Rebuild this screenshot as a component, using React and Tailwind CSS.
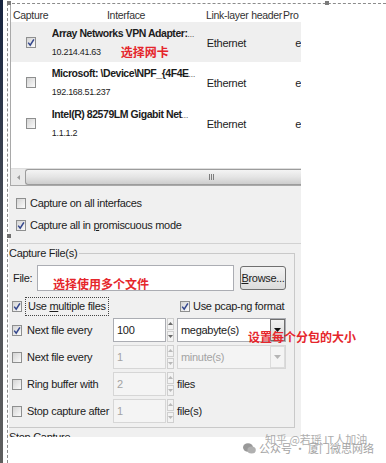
import React from "react";

function Check({ checked }) {
  return (
    <span className="w-[10px] h-[11px] shrink-0 border border-[#8e8f8f] bg-gradient-to-br from-[#d4d4d4] to-[#fbfbfb] flex items-center justify-center">
      {checked && (
        <svg width="8" height="9" viewBox="0 0 8 9">
          <path d="M1.2 4.6 L3.2 7.2 L6.9 1.3" stroke="#33468c" strokeWidth="1.5" fill="none" />
        </svg>
      )}
    </span>
  );
}

function Tri({ up, color }) {
  return (
    <svg width="5" height="3" viewBox="0 0 5 3">
      <path d={up ? "M0 3 L2.5 0 L5 3 Z" : "M0 0 L5 0 L2.5 3 Z"} fill={color} />
    </svg>
  );
}

function Spin({ value, disabled }) {
  return (
    <div className="flex h-full w-[61px] shrink-0">
      <div
        className={`w-[53px] h-full border flex items-center pl-[3px] ${
          disabled ? "border-[#d6d6d6] bg-[#f4f4f4] text-[#a3a3a3]" : "border-[#abadb3] bg-white text-[#1a1a1a]"
        }`}
      >
        {value}
      </div>
      <div className="w-[7px] ml-[1px] flex flex-col gap-[1px]">
        <div className="flex-1 border border-[#cfcfcf] bg-[#f3f3f3] flex items-center justify-center">
          <Tri up color={disabled ? "#b8b8b8" : "#6a6a6a"} />
        </div>
        <div className="flex-1 border border-[#cfcfcf] bg-[#f3f3f3] flex items-center justify-center">
          <Tri color={disabled ? "#b8b8b8" : "#6a6a6a"} />
        </div>
      </div>
    </div>
  );
}

function Combo({ value, disabled, children }) {
  return (
    <div
      className={`relative w-[109px] h-full border flex items-center ml-[3px] ${
        disabled ? "border-[#d6d6d6] bg-[#f4f4f4] text-[#a3a3a3]" : "border-[#abadb3] bg-white text-[#1a1a1a]"
      }`}
    >
      <span className="pl-[3px] flex-1 whitespace-nowrap">{value}</span>
      <div
        className={`w-[15px] h-full border flex items-center justify-center ${
          disabled ? "border-[#dcdcdc] bg-[#f4f4f4]" : "border-[#707070] bg-gradient-to-b from-[#f2f2f2] to-[#d8d8d8]"
        }`}
      >
        <svg width="7" height="4" viewBox="0 0 7 4">
          <path d="M0 0 L7 0 L3.5 4 Z" fill={disabled ? "#b5b5b5" : "#111"} />
        </svg>
      </div>
      {children}
    </div>
  );
}

function IfaceRow({ name, ip, note, selected, h }) {
  return (
    <div className={`flex ${h} ${selected ? "bg-[#efefef]" : ""}`}>
      <div className="w-[41px] pl-[15px] flex items-center">
        <Check checked={selected} />
      </div>
      <div className="w-[146px] pt-[4px] overflow-hidden">
        <div className="font-bold leading-[15px] whitespace-nowrap text-[10.5px] tracking-[-0.45px]">
          {name}
          <span className="font-normal text-[8px] tracking-normal">...</span>
        </div>
        <div className="flex items-center mt-[3px] leading-[14px]">
          <span className="text-[9px]">{ip}</span>
          {note && (
            <span className="ml-[20px] text-[12px] font-bold tracking-normal text-[#e5262c] font-['Noto_Sans_CJK_SC',sans-serif]">
              {note}
            </span>
          )}
        </div>
      </div>
      <div className="w-[99px] pl-[10px] flex items-center pt-[2px]">Ethernet</div>
      <div className="flex items-center pt-[2px]">e</div>
    </div>
  );
}

export default function App() {
  return (
    <div className="w-[386px] h-[463px] bg-white relative overflow-hidden flex font-['Liberation_Sans',Arial,sans-serif] text-[11px] tracking-[-0.3px] whitespace-nowrap text-[#1c1c1c]">
      <div className="w-[3px] bg-gradient-to-b from-[#16233f] via-[#4b4f57] to-[#5e5e5e]" />
      <div className="w-[4px]" />
      <div className="flex-1 flex flex-col pt-[3px]">
        <div className="flex-1 border-t border-l border-dashed border-[#8c8c8c] flex flex-col">
          <div className="w-[292px] ml-[1px] flex flex-col">
            {/* interface list */}
            <div className="h-[182px] ml-[1px] border-l border-b border-[#a9a9a9] bg-white flex flex-col overflow-hidden">
              <div className="mt-[4px] h-[14px] flex items-center text-[#333] leading-[14px] text-[10.5px]">
                <span className="w-[96px] pl-[2px]">Capture</span>
                <span className="w-[99px]">Interface</span>
                <span className="w-[77px]">Link-layer header</span>
                <span>Pro</span>
              </div>
              <IfaceRow selected h="h-[40px]" name="Array Networks VPN Adapter:" ip="10.214.41.63" note="选择网卡" />
              <IfaceRow h="h-[41px]" name="Microsoft: \Device\NPF_{4F4E" ip="192.168.51.237" />
              <IfaceRow h="h-[41px]" name="Intel(R) 82579LM Gigabit Net" ip="1.1.1.2" />
              <div className="flex-1" />
              <div className="h-[17px] flex bg-[#e9e9e9] border-t border-[#dedede]">
                <div className="w-[14px] flex items-center justify-center">
                  <svg width="3" height="5" viewBox="0 0 3 5">
                    <path d="M3 0 L0 2.5 L3 5 Z" fill="#9a9a9a" />
                  </svg>
                </div>
                <div className="flex-1 rounded-l-[3px] border border-r-0 border-[#9c9c9c] bg-gradient-to-b from-[#f4f4f4] via-[#e4e4e4] to-[#cdcdcd] flex items-center pl-[183px] gap-[1px]">
                  <span className="w-[1px] h-[6px] bg-[#7d7d7d]" />
                  <span className="w-[1px] h-[6px] bg-[#7d7d7d]" />
                  <span className="w-[1px] h-[6px] bg-[#7d7d7d]" />
                </div>
              </div>
            </div>

            {/* options */}
            <div className="bg-[#f0f0f0] flex flex-col">
              <div className="pt-[6px] pl-[7px]">
                <div className="h-[22px] flex items-center gap-[4px]">
                  <Check />
                  <span>Capture on all interfaces</span>
                </div>
                <div className="h-[22px] flex items-center gap-[4px]">
                  <Check checked />
                  <span>
                    Capture all in <span className="underline">p</span>romiscuous mode
                  </span>
                </div>
              </div>
              <div className="h-[7px]" />
              <div className="border-t border-[#d2d2d2]" />

              {/* Capture File(s) group */}
              <div className="mt-[2px] h-[14px] flex items-center pr-[6px]">
                <span className="leading-[14px]">Capture File(s)</span>
                <div className="flex-1 ml-[2px] h-[7px] self-end border-t border-r border-[#c9c9c9]" />
              </div>
              <div className="mr-[6px] border-r border-b border-[#c9c9c9] pl-[3px] pb-[4px] flex flex-col">
                <div className="mt-[5px] h-[26px] flex items-center">
                  <span className="ml-[1px] w-[24px]">File:</span>
                  <div className="relative w-[197px] h-[26px] border border-[#abadb3] bg-white">
                    <span className="absolute left-[15px] top-[11px] leading-[14px] text-[12px] font-bold tracking-normal text-[#e5262c] font-['Noto_Sans_CJK_SC',sans-serif]">
                      选择使用多个文件
                    </span>
                  </div>
                  <div className="ml-[6px] w-[46px] h-[24px] rounded-[3px] border border-[#707070] bg-gradient-to-b from-[#f3f3f3] to-[#dcdcdc] flex items-center justify-center">
                    <span>
                      <span className="underline">B</span>rowse...
                    </span>
                  </div>
                </div>
                <div className="mt-[5px] h-[21px] flex items-center">
                  <div className="w-[168px] flex items-center">
                    <Check checked />
                    <span className="ml-[3px] h-[19px] px-[2px] flex items-center border border-dotted border-[#444]">
                      Use&nbsp;<span className="underline">m</span>ultiple files
                    </span>
                  </div>
                  <Check checked />
                  <span className="ml-[3px]">Use pcap-ng format</span>
                </div>
                <div className="mt-[1px] flex flex-col gap-[3px]">
                  <div className="h-[24px] flex items-center">
                    <div className="w-[101px] flex items-center gap-[5px]">
                      <Check checked />
                      <span>Next file every</span>
                    </div>
                    <Spin value="100" />
                    <Combo value="megabyte(s)">
                      <span className="absolute left-[70px] top-[11px] leading-[14px] whitespace-nowrap text-[12px] font-bold tracking-normal text-[#e5262c] font-['Noto_Sans_CJK_SC',sans-serif]">
                        设置每个分包的大小
                      </span>
                    </Combo>
                  </div>
                  <div className="h-[24px] flex items-center">
                    <div className="w-[101px] flex items-center gap-[5px]">
                      <Check />
                      <span>Next file every</span>
                    </div>
                    <Spin value="1" disabled />
                    <Combo value="minute(s)" disabled />
                  </div>
                  <div className="h-[24px] flex items-center">
                    <div className="w-[101px] flex items-center gap-[5px]">
                      <Check />
                      <span>Ring buffer with</span>
                    </div>
                    <Spin value="2" disabled />
                    <span className="ml-[3px]">files</span>
                  </div>
                  <div className="h-[24px] flex items-center">
                    <div className="w-[101px] flex items-center gap-[5px]">
                      <Check />
                      <span>Stop capture after</span>
                    </div>
                    <Spin value="1" disabled />
                    <span className="ml-[3px]">file(s)</span>
                  </div>
                </div>
              </div>
              <div className="h-[9px] overflow-hidden">
                <div className="mt-[2px] leading-[14px]">Stop Capture...</div>
              </div>
            </div>
          </div>
        </div>
      </div>

      {/* selection handles */}
      <span className="absolute left-[7px] top-[1px] w-[4px] h-[4px] bg-[#7b7b7b]" />
      <span className="absolute left-[325px] top-[1px] w-[4px] h-[4px] bg-[#7b7b7b]" />
      <span className="absolute left-[7px] top-[234px] w-[4px] h-[4px] bg-[#6f6f6f]" />

      {/* watermark */}
      <div className="absolute left-[243px] top-[432px] w-[140px] h-[24px] text-[11px] tracking-normal font-['Noto_Sans_CJK_SC',sans-serif] text-[#9a9a9a]">
        <span className="absolute left-[22px] top-[0px] leading-[14px] opacity-80">知乎 @若瑶 IT人加油</span>
        <div className="absolute left-[0px] top-[9px] flex items-center gap-[3px] opacity-90">
          <svg width="13" height="11" viewBox="0 0 13 11">
            <ellipse cx="5" cy="4.5" rx="5" ry="4.2" fill="#8e8e8e" />
            <ellipse cx="8.6" cy="7" rx="4.2" ry="3.5" fill="#a8a8a8" />
          </svg>
          <span className="leading-[14px]">公众号 · 厦门微思网络</span>
        </div>
      </div>
    </div>
  );
}
